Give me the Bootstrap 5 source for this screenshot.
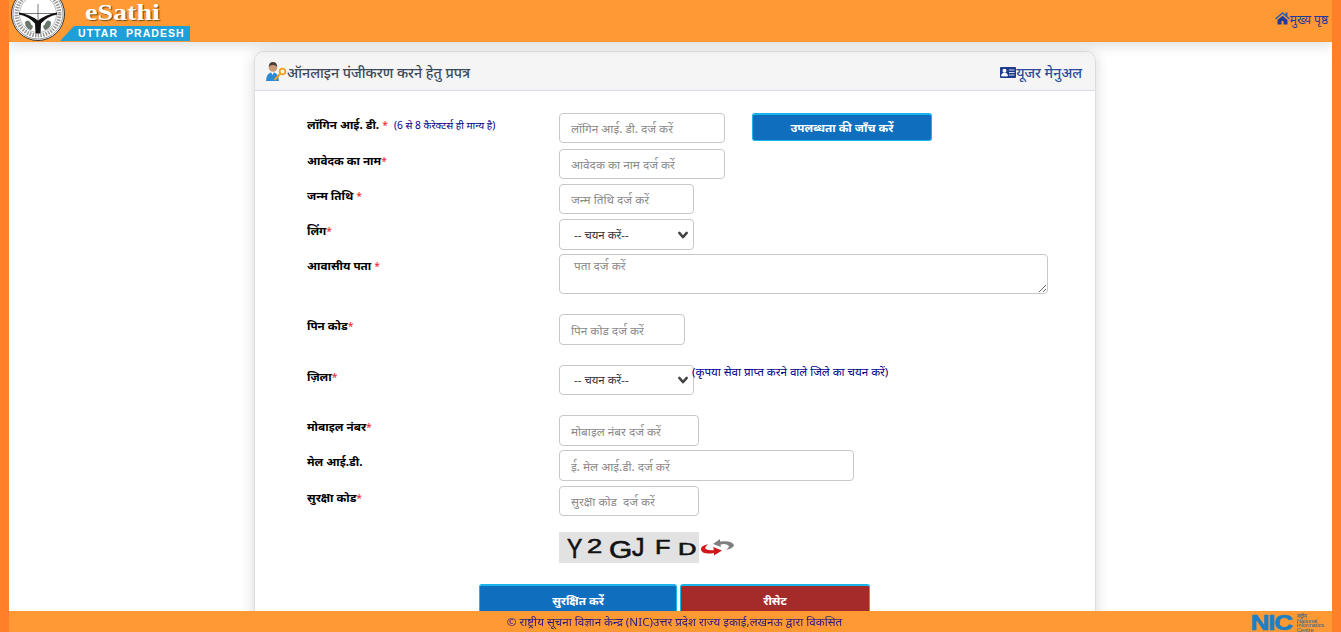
<!DOCTYPE html>
<html lang="hi"><head><meta charset="utf-8"><title>eSathi</title>
<link rel="stylesheet" href="https://cdn.jsdelivr.net/npm/bootstrap@5.3.0/dist/css/bootstrap.min.css">
<style>
html,body{height:100%;overflow:hidden}
body{background:#fff;border-left:9px solid #ff8028;border-right:9px solid #ff8028;font-family:"Noto Sans","Liberation Sans",sans-serif;font-size:12px;color:#000}
.top-bar{height:42px;background:#ff9933;box-shadow:0 3px 14px rgba(0,0,0,.14);position:relative;z-index:2}
.emblem{width:54px;height:42px;margin-left:2px}
.brand-box{width:130px;height:42px;margin-left:-5px}
.brand-name{font:bold 23px/26px "Liberation Serif",serif;color:#fff;text-shadow:1px 1px 1px #7a4a10;padding-left:25px;height:26px}
.brand-name span{display:inline-block;transform:scaleX(1.22);transform-origin:left}
.brand-state{height:15px;background:#1e9fd8;color:#fff;font:bold 10.5px/15px "Liberation Sans",sans-serif;letter-spacing:1.05px;white-space:pre;padding-left:18px;clip-path:polygon(14px 0,100% 0,100% 100%,0 100%)}
.home-link{color:#1d3a9c;font-size:12px;margin-right:4px;margin-top:11px;text-decoration:none;height:20px}
.form-panel{width:842px;margin:9px auto 0 245px;border:1px solid #ddd;border-radius:10px;box-shadow:0 2px 14px rgba(0,0,0,.16);background:#fff;height:640px}
.panel-head{height:39px;background:#f5f5f5;border-bottom:1px solid #dcdce8;border-radius:9px 9px 0 0;padding:3px 12px 0 11px;font-size:14.2px}
.panel-title{color:#3b4a5a;font-weight:500}
.manual-link{color:#2b4c9b;font-weight:500;text-decoration:none;font-size:14px;margin-right:1px}
.panel-body{padding:22px 0 0 52px}
.field-row{margin-bottom:5px}
.gap-s{margin-bottom:4px}.gap-l{margin-bottom:20px}.gap-m{margin-bottom:16px}.gap-xl{margin-bottom:21px}.gap-t{margin-bottom:6px}
.field-label{width:252px;flex:none;font-weight:700;font-size:11.7px;line-height:18px;padding-top:1.500px}
.req{color:#e8212b;font-weight:400;font-size:10.5px}
.hint{color:#00008b;font-size:10.2px;font-weight:400;margin-left:3px}
.hint-side{color:#00008b;font-size:11.6px;line-height:16px;margin-top:-1px;margin-left:-2px;white-space:nowrap}
.field-input{height:30px;font-size:11.8px;padding:0 11px;border:1px solid #c8c8c8;border-radius:4px;color:#333}
.field-input::placeholder{color:#8a8a8a}
.w-a{width:166px}.w-b{width:135px}.w-c{width:126px;height:31px}.w-d{width:140px}.w-e{width:295px}.tall{height:31px}
.field-select{height:30px;font-size:11.5px;padding:0 11px 0 14px;border:1px solid #c8c8c8;border-radius:4px;color:#333;background-position:right 5px center;background-size:10px 8px;background-image:url("data:image/svg+xml,%3csvg xmlns='http://www.w3.org/2000/svg' viewBox='0 0 16 13'%3e%3cpath fill='none' stroke='%23444' stroke-width='4' stroke-linecap='round' stroke-linejoin='round' d='M2 3l6 7 6-7'/%3e%3c/svg%3e")}
.sel-tall{height:31px}
.field-area{width:489px;height:40px;font-size:11.8px;padding:2px 14px;border:1px solid #c8c8c8;border-radius:4px}
.field-area::placeholder{color:#8a8a8a}
.act-blue{background:#0f6fbe;color:#fff;font-weight:700;font-size:11.7px;border:1px solid #18b6ea;border-top-width:2px;border-radius:3px;padding:0;line-height:1}
.act-red{background:#a52a2a;color:#fff;font-weight:700;font-size:11.7px;border:1px solid #18b6ea;border-top-width:2px;border-radius:3px;padding:0;line-height:1}
.check-btn{width:180px;height:28px;margin-left:27px}
.save-btn{width:198px;height:32px}.reset-btn{width:190px;height:32px;margin-left:3px}
.btn-row{margin-left:172px}
.captcha-box{width:140px;height:31px;background:#e2e2e2;font-family:"Liberation Sans",sans-serif;color:#111;padding-left:8px;overflow:hidden}
.captcha-box span{display:block;line-height:1;transform-origin:left top;flex:none;-webkit-text-stroke:.6px #111}
.cap-a{width:20px;font-size:27px;margin-top:3.6px;transform:scaleX(.85)}
.cap-b{width:22px;font-size:21px;margin-top:2.6px;transform:scaleX(1.3)}
.cap-c{width:23px;font-size:23px;margin-top:7px;transform:scaleX(1.3)}
.cap-d{width:23px;font-size:25px;margin-top:3.2px}
.cap-e{width:23px;font-size:21px;margin-top:3.6px;transform:scaleX(1.2)}
.cap-f{width:20px;font-size:17px;margin-top:9px;transform:scaleX(1.5)}
.end-bar{position:fixed;left:9px;right:9px;bottom:0;height:21px;background:#ff9933;z-index:3;color:#2a1a80;font-size:11.65px;line-height:21px;text-align:center;padding-left:8px}
.nic-logo{position:absolute;right:7px;top:3px;height:18px;width:74px;color:#1f7fc4;text-align:left;display:flex}
.nic-word{font:bold 22px/18px "Liberation Sans",sans-serif;letter-spacing:-1px;transform:scaleX(1.18);transform-origin:left;width:46px;-webkit-text-stroke:.7px #1f7fc4}
.nic-small{font:5.6px/4.6px "Liberation Sans",sans-serif;color:#1c5f9c;white-space:nowrap}
</style></head>
<body>
<header class="top-bar d-flex justify-content-between">
 <div class="d-flex">
  <svg class="emblem" viewBox="0 0 54 42"><circle cx="27" cy="14" r="26.500" fill="#fff" stroke="#333"/><circle cx="27" cy="14" r="25" fill="none" stroke="#555" stroke-width=".6"/><circle cx="27" cy="14" r="21.500" fill="none" stroke="#555" stroke-dasharray="1.500 1.200" stroke-width="4" opacity=".6"/><circle cx="27" cy="14" r="18.500" fill="none" stroke="#777" stroke-width=".5"/><path d="M9 13.500H45M27 4V20" stroke="#444" stroke-width=".7"/><path d="M8 12.500q11 2 19 8 8-6 19-8v2q-10 2-16 9l-.5 10h-5L24 23.500Q18 16.500 8 14.500z" fill="#111"/><path d="M14 22q3-3 5 0 1 3 3 4-1 4-2.500 4Q14 28 14 22zM40 22q-3-3-5 0-1 3-3 4 1 4 2.500 4Q40 28 40 22z" fill="#6a766c"/></svg>
  <div class="brand-box"><div class="brand-name"><span>eSathi</span></div><div class="brand-state">UTTAR  PRADESH</div></div>
 </div>
 <a class="home-link d-flex align-items-start" href="#"><svg width="15" height="14" viewBox="0 0 15 14"><path d="M7.500 1 0 7.500l1 1L7.500 3l6.500 5.500 1-1-2.500-2.200V1.500h-2v2z" fill="#2a5fb0"/><path d="M2.500 9v4.500h4V10h2v3.500h4V9l-5-4.300z" fill="#1d3a9c"/></svg><span>मुख्य पृष्ठ</span></a>
</header>
<main class="form-panel">
 <div class="panel-head d-flex justify-content-between align-items-center">
  <div class="panel-title d-flex align-items-center"><svg width="21" height="20" viewBox="0 0 21 20"><path d="M0 19q0-8 6.500-9 6.500 1 6.500 9z" fill="#2a8ad4"/><path d="M5 10h3l-1.500 3z" fill="#fff"/><circle cx="7" cy="5.500" r="4.300" fill="#c99a78"/><path d="M2.800 5q0-5 4.200-5t4.200 5q-1-2-4.200-2T2.800 5z" fill="#4a4038"/><circle cx="16.500" cy="9.500" r="2.800" fill="none" stroke="#f0a020" stroke-width="1.800"/><path d="m14.500 11.500-6 6.500" stroke="#f0a020" stroke-width="2"/></svg><span>ऑनलाइन पंजीकरण करने हेतु प्रपत्र</span></div>
  <a class="manual-link d-flex align-items-center" href="#"><svg width="16" height="11" viewBox="0 0 16 11"><rect width="16" height="11" rx="1" fill="#1d3a8c"/><circle cx="4.500" cy="3.800" r="2" fill="#fff"/><path d="M1.500 9q0-3 3-3t3 3zM9 3h5.500M9 5.500h5.500M9 8h5.500" fill="#fff" stroke="#fff" stroke-width=".8"/></svg><span>यूजर मेनुअल</span></a>
 </div>
 <form class="panel-body">
  <div class="d-flex field-row gap-t"><div class="field-label">लॉगिन आई. डी. <span class="req">*</span> <span class="hint">(6 से 8 कैरेक्टर्स ही मान्य है)</span></div><input class="form-control field-input w-a" placeholder="लॉगिन आई. डी. दर्ज करें"><button type="button" class="btn act-blue check-btn">उपलब्धता की जाँच करें</button></div>
  <div class="d-flex field-row"><div class="field-label">आवेदक का नाम<span class="req">*</span></div><input class="form-control field-input w-a" placeholder="आवेदक का नाम दर्ज करें"></div>
  <div class="d-flex field-row"><div class="field-label">जन्म तिथि <span class="req">*</span></div><input class="form-control field-input w-b" placeholder="जन्म तिथि दर्ज करें"></div>
  <div class="d-flex field-row gap-s"><div class="field-label">लिंग<span class="req">*</span></div><select class="form-select field-select sel-tall w-b"><option>-- चयन करें--</option></select></div>
  <div class="d-flex field-row gap-l"><div class="field-label">आवासीय पता <span class="req">*</span></div><textarea class="form-control field-area" placeholder="पता दर्ज करें"></textarea></div>
  <div class="d-flex field-row gap-l"><div class="field-label">पिन कोड<span class="req">*</span></div><input class="form-control field-input w-c" placeholder="पिन कोड दर्ज करें"></div>
  <div class="d-flex field-row gap-l"><div class="field-label">ज़िला<span class="req">*</span></div><select class="form-select field-select w-b"><option>-- चयन करें--</option></select><div class="hint-side">(कृपया सेवा प्राप्त करने वाले जिले का चयन करें)</div></div>
  <div class="d-flex field-row gap-s"><div class="field-label">मोबाइल नंबर<span class="req">*</span></div><input class="form-control field-input w-d tall" placeholder="मोबाइल नंबर दर्ज करें"></div>
  <div class="d-flex field-row"><div class="field-label">मेल आई.डी.</div><input class="form-control field-input w-e tall" placeholder="ई. मेल आई.डी. दर्ज करें"></div>
  <div class="d-flex field-row gap-m"><div class="field-label">सुरक्षा कोड<span class="req">*</span></div><input class="form-control field-input w-d" placeholder="सुरक्षा कोड  दर्ज करें"></div>
  <div class="d-flex field-row gap-xl"><div class="field-label"></div><div class="captcha-box d-flex"><span class="cap-a">Y</span><span class="cap-b">2</span><span class="cap-c">G</span><span class="cap-d">J</span><span class="cap-e">F</span><span class="cap-f">D</span></div><svg width="36" height="31" viewBox="0 0 36 31"><path d="M27 18q8-2 8-5-2-5-14-3.500V7l-7 5 8 3-.5-2.500q5.500-1.500 8.500 1.500 0 2-3 4z" fill="#808080"/><path d="M9 12q-8 2-7 6 2 5 13 3v2.500l8-5-9-3.500 1 3q-7 1-9-2 1-2 3-4z" fill="#d01818"/></svg></div>
  <div class="d-flex btn-row"><button type="button" class="btn act-blue save-btn">सुरक्षित करें</button><button type="reset" class="btn act-red reset-btn">रीसेट</button></div>
 </form>
</main>
<footer class="end-bar">© राष्ट्रीय सूचना विज्ञान केन्द्र (NIC)उत्तर प्रदेश राज्य इकाई,लखनऊ द्वारा विकसित
 <div class="nic-logo"><div class="nic-word">NIC</div><div class="nic-small">राष्ट्रीय<br>National<br>Informatics<br>Centre</div></div>
</footer>
</body></html>
